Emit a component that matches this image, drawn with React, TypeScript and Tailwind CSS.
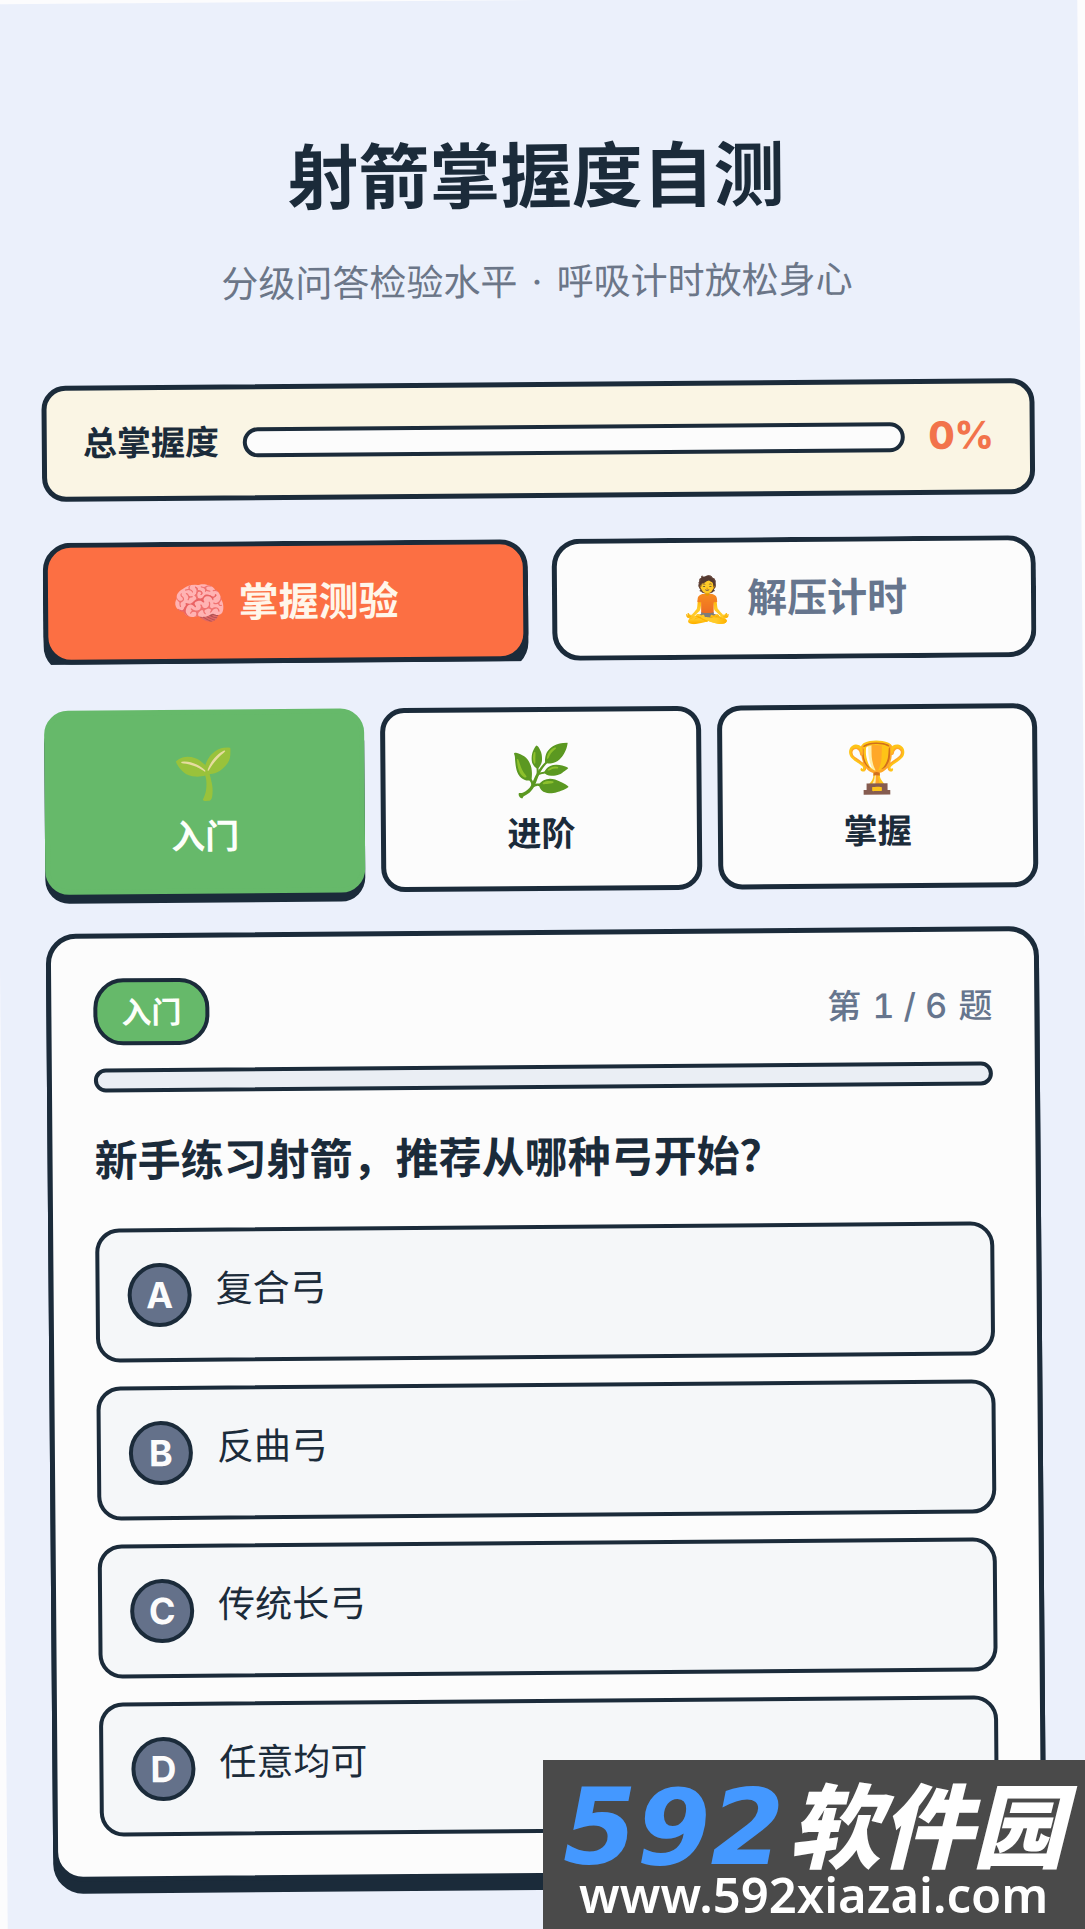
import { useState } from "react";
import clsx from "clsx";

const levels = [
  { icon: "🌱", name: "入门" },
  { icon: "🌿", name: "进阶" },
  { icon: "🏆", name: "掌握" },
];

const options = ["复合弓", "反曲弓", "传统长弓", "任意均可"];

function Header() {
  return (
    <header className="text-center">
      <h1 className="text-[71px] leading-[84px] font-bold">射箭掌握度自测</h1>
      <p className="mt-10 text-[37px] leading-[48px] text-[#6b7688]">
        分级问答检验水平 <span className="px-1">·</span> 呼吸计时放松身心
      </p>
    </header>
  );
}

function Mastery() {
  return (
    <section className="mt-[76px] flex h-[116px] items-center rounded-3xl border-5 border-[#1b2b3a] bg-[#faf5e4] px-9">
      <span id="mastery" className="text-[34px] leading-[48px] font-bold">总掌握度</span>
      <div
        role="progressbar"
        aria-labelledby="mastery"
        aria-valuenow={0}
        className="mx-6 h-[30px] flex-1 rounded-full border-4 border-[#1b2b3a] bg-[#fcfcfc]"
      />
      <span className="pb-1 text-[38px] leading-[48px] font-extrabold text-[#f2734b]">0%</span>
    </section>
  );
}

function Tabs() {
  const [tab, setTab] = useState(0);
  const tabs = [
    { icon: "🧠", name: "掌握测验" },
    { icon: "🧘", name: "解压计时" },
  ];
  return (
    <nav className="mt-[41px] grid grid-cols-2 gap-6 overflow-hidden">
      {tabs.map((t, i) => (
        <button
          key={t.name}
          onClick={() => setTab(i)}
          className={clsx(
            "flex h-[122px] items-center justify-center gap-3 rounded-[28px] border-5 border-[#1b2b3a] text-[40px] leading-[48px] font-bold",
            i === tab ? "bg-[#fc6f43] text-[#fff6ea] shadow-[0_9px_0_#1b2b3a]" : "bg-[#fcfcfc] text-[#66758d]",
          )}
        >
          <span className="text-[44px] leading-[48px]">{t.icon}</span>
          <span>{t.name}</span>
        </button>
      ))}
    </nav>
  );
}

function Levels() {
  const [level, setLevel] = useState(0);
  return (
    <div className="mt-[46px] grid grid-cols-3 gap-4">
      {levels.map((l, i) => (
        <button
          key={l.name}
          onClick={() => setLevel(i)}
          className={clsx(
            "flex h-[184px] flex-col items-center justify-center rounded-3xl border-5 pb-0.5",
            i === level
              ? "border-[#66b96a] bg-[#66b96a] text-[#fcfffa] shadow-[0_9px_0_#1b2b3a]"
              : "border-[#1b2b3a] bg-[#fcfcfc]",
          )}
        >
          <span className="text-[50px] leading-[64px]">{l.icon}</span>
          <span className="mt-2 text-[34px] leading-[48px] font-bold">{l.name}</span>
        </button>
      ))}
    </div>
  );
}

function Quiz() {
  return (
    <main className="mt-[39px] rounded-[30px] border-5 border-[#1b2b3a] bg-[#fcfcfc] px-[42px] py-10 shadow-[0_12px_0_#1b2b3a]">
      <div className="flex items-center justify-between">
        <span className="flex h-[67px] items-center rounded-[30px] border-4 border-[#1b2b3a] bg-[#66b96a] px-6 text-[30px] leading-10 font-bold text-[#fcfffa]">
          入门
        </span>
        <span className="text-[34px] leading-[48px] font-medium text-[#66758d] tabular-nums">
          第 <span className="px-0.5">1 / 6</span> 题
        </span>
      </div>
      <div
        role="progressbar"
        aria-label="答题进度"
        aria-valuenow={0}
        className="mt-[23px] h-6 rounded-full border-4 border-[#1b2b3a] bg-[#eaeef4]"
      />
      <h2 className="mt-9 text-[43px] leading-[64px] font-bold">新手练习射箭，推荐从哪种弓开始？</h2>
      <ul className="mt-9 flex flex-col gap-6">
        {options.map((o, i) => (
          <li key={o}>
            <button className="flex h-[134px] w-full items-center gap-6 rounded-3xl border-4 border-[#1b2b3a] bg-[#f5f7f9] px-7 text-left">
              <span className="flex size-16 items-center justify-center rounded-full border-4 border-[#1b2b3a] bg-[#64718a] text-[36px] leading-[48px] font-bold text-[#fcfcfc]">
                {"ABCD"[i]}
              </span>
              <span className="pb-3 text-[37px] leading-[48px]">{o}</span>
            </button>
          </li>
        ))}
      </ul>
    </main>
  );
}

function SiteBadge() {
  return (
    <aside className="absolute right-0 bottom-0 flex h-[169px] w-1/2 flex-col items-center bg-[#4a4a4a] pt-6 text-white">
      <div className="flex items-center gap-1 font-black whitespace-nowrap italic">
        <span className="font-['DejaVu_Sans'] text-[106px] leading-[88px] text-[#4498ff]">592</span>
        <span className="text-[92px] leading-[88px]">软件园</span>
      </div>
      <a href="#" className="font-['Noto_Sans'] text-[49px] leading-[44px] font-semibold">www.592xiazai.com</a>
    </aside>
  );
}

export default function App() {
  return (
    <div className="relative min-h-screen overflow-hidden bg-[#fcfcfd] font-['Inter','Noto_Sans_CJK_SC','Noto_Color_Emoji',sans-serif] text-[#1b2b3a]">
      <div className="min-h-screen origin-center rotate-[-0.46deg] bg-[#ebf0fb] px-[46px] pt-[134px] pb-[50px]">
        <Header />
        <Mastery />
        <Tabs />
        <Levels />
        <Quiz />
      </div>
      <SiteBadge />
    </div>
  );
}
